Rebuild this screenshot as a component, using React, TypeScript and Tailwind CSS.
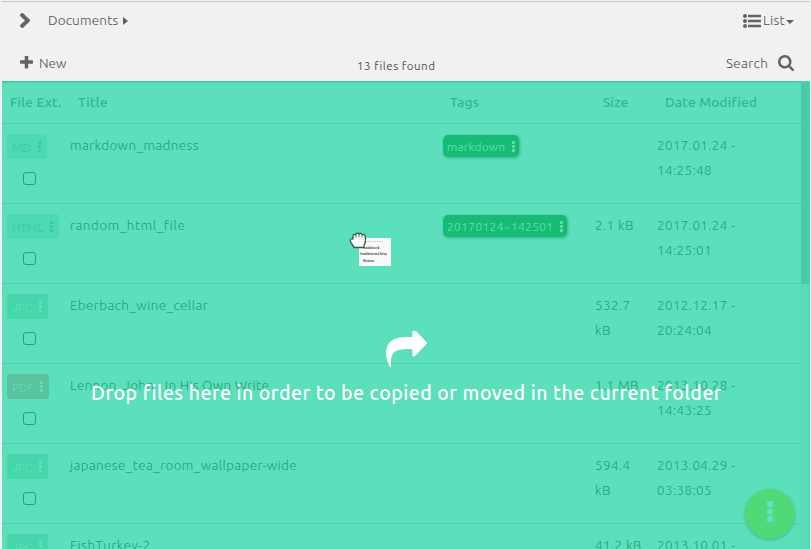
import React from "react";

type FileRow = {
  ext: string;
  badge: string;
  title: string;
  titleTracking: string;
  tag?: string;
  tagClass?: string;
  size?: string[];
  date: string[];
};

const green = "bg-[#4ddab3] text-[#3ac9a0]";
const jpg = "bg-[#47d5ac] text-[#60dfbb]";

const rows: FileRow[] = [
  { ext: "MD", badge: `${green} w-10`, title: "markdown_madness", titleTracking: "tracking-[0.36px]", tag: "markdown", tagClass: "w-[76px] tracking-[0.15px]", date: ["2017.01.24 -", "14:25:48"] },
  { ext: "HTML", badge: `${green} w-[52px]`, title: "random_html_file", titleTracking: "tracking-[0.5px]", tag: "20170124~142501", tagClass: "w-[124px] tracking-[0.33px]", size: ["2.1 kB"], date: ["2017.01.24 -", "14:25:01"] },
  { ext: "JPG", badge: `${jpg} w-[41px]`, title: "Eberbach_wine_cellar", titleTracking: "tracking-[0.38px]", size: ["532.7", "kB"], date: ["2012.12.17 -", "20:24:04"] },
  { ext: "PDF", badge: "bg-[#5ac39e] text-[#61dfbb] w-[42px]", title: "Lennon, John - In His Own Write", titleTracking: "tracking-[0.27px]", size: ["1.1 MB"], date: ["2013.10.28 -", "14:43:25"] },
  { ext: "JPG", badge: `${jpg} w-[41px]`, title: "japanese_tea_room_wallpaper-wide", titleTracking: "tracking-[0.34px]", size: ["594.4", "kB"], date: ["2013.04.29 -", "03:38:05"] },
  { ext: "JPG", badge: `${jpg} w-[41px]`, title: "FishTurkey-2", titleTracking: "tracking-[0.5px]", size: ["41.2 kB"], date: ["2013.10.01 -"] },
];

function Dots({ className }: { className: string }) {
  return (
    <svg viewBox="0 0 3 11" className={className} fill="currentColor">
      <rect width="3" height="3" rx="0.4" />
      <rect y="4" width="3" height="3" rx="0.4" />
      <rect y="8" width="3" height="3" rx="0.4" />
    </svg>
  );
}

function Toolbar() {
  return (
    <header className="ml-0.5 mr-px mt-px h-20 border-t border-[#cacaca] text-[#505050]">
      <div className="flex h-[37px] items-center pl-[18px] pr-4">
        <svg viewBox="346 109 1036 1548" preserveAspectRatio="none" className="h-[15px] w-2.5" fill="#636363" stroke="#636363" strokeWidth="70">
          <path d="M1363 928l-742 710q-19 19-45 19t-45-19l-166-166q-19-19-19-45t19-45l531-499-531-499q-19-19-19-45t19-45l166-166q19-19 45-19t45 19l742 710q19 19 19 45t-19 45z" />
        </svg>
        <span className="ml-[18px] w-[75px] whitespace-nowrap tracking-[0.2px]">Documents</span>
        <svg viewBox="0 0 5 8" className="h-2 w-[5px]" fill="#606060"><path d="M0 0l5 4-5 4z" /></svg>
        <svg viewBox="0 0 18 14" className="ml-auto h-3.5 w-[18px]" fill="#636363">
          <circle cx="2" cy="2" r="2" /><circle cx="2" cy="7" r="2" /><circle cx="2" cy="12" r="2" />
          <rect x="5" y="0.7" width="13" height="2.6" rx=".3" /><rect x="5" y="5.7" width="13" height="2.6" rx=".3" /><rect x="5" y="10.7" width="13" height="2.6" rx=".3" />
        </svg>
        <span className="ml-[2px] w-[23px] whitespace-nowrap tracking-[0.3px]">List</span>
        <svg viewBox="0 0 8 4" className="mt-0.5 h-1 w-2" fill="#606060"><path d="M0 0h8L4 4z" /></svg>
      </div>
      <div className="flex h-[42px] items-center pb-px pl-[18px] pr-4 pt-1.5">
        <svg viewBox="192 192 1408 1408" className="size-[13px]" fill="#636363">
          <path d="M1600 736v192q0 40-28 68t-68 28h-416v416q0 40-28 68t-68 28h-192q-40 0-68-28t-28-68v-416h-416q-40 0-68-28t-28-68v-192q0-40 28-68t68-28h416v-416q0-40 28-68t68-28h192q40 0 68 28t28 68v416h416q40 0 68 28t28 68z" />
        </svg>
        <span className="ml-1.5 mt-0.5">New</span>
        <span className="ml-auto mt-1.5 w-[80px] whitespace-nowrap text-[11.5px] font-normal tracking-[0.52px]">13 files found</span>
        <span className="ml-[289px] mt-0.5 w-[52px] whitespace-nowrap tracking-[0.35px]">Search</span>
        <svg viewBox="64 128 1664 1664" className="size-4" fill="#636363">
          <path d="M1216 832q0-185-131.500-316.500t-316.500-131.500-316.500 131.500-131.500 316.500 131.500 316.500 316.500 131.500 316.500-131.500 131.500-316.500zm512 832q0 52-38 90t-90 38q-54 0-90-38l-343-342q-179 124-399 124-143 0-273.500-55.500t-225-150-150-225-55.500-273.500 55.500-273.500 150-225 225-150 273.500-55.500 273.500 55.500 225 150 150 225 55.500 273.500q0 220-124 399l343 343q37 37 37 90z" />
        </svg>
      </div>
    </header>
  );
}

const columns = "grid grid-cols-[68px_373px_152px_62px_144px]";

function Row({ row }: { row: FileRow }) {
  return (
    <div className={`${columns} h-20 shrink-0 border-b border-[#51d2ad] pt-[9px] leading-[25px]`}>
      <div className="pl-[5px] pt-px">
        <div className={`${row.badge} flex h-[25px] items-center justify-between rounded-[3px] pl-[5px] pr-1.5 text-[12px]`}>
          <span className="mt-0.5">{row.ext}</span>
          <Dots className="h-[11px] w-[3px]" />
        </div>
        <div className="ml-4 mt-[13px] size-[13px] rounded-[3px] border border-[#1fa47e]" />
      </div>
      <div className={`${row.titleTracking} whitespace-nowrap`}>{row.title}</div>
      <div className="pt-0.5">
        {row.tag && (
          <div className={`${row.tagClass} flex h-[22px] items-center justify-between rounded-[5px] bg-[#16bc73] pl-1 pr-1 text-[12px] font-normal text-[#5cdfaf] shadow-[1px_1px_3px_rgba(20,130,95,0.45)]`}>
            <span className="mt-px">{row.tag}</span>
            <Dots className="h-[11px] w-[3px]" />
          </div>
        )}
      </div>
      <div className="tracking-[0.35px]">{row.size?.map((s) => <div key={s} className="whitespace-nowrap">{s}</div>)}</div>
      <div className="tracking-[0.34px]">{row.date.map((d) => <div key={d} className="whitespace-nowrap">{d}</div>)}</div>
    </div>
  );
}

function DragPreview() {
  return (
    <div className="absolute left-[349px] top-[231px] h-9 w-[43px]">
      <div className="absolute left-2.5 top-[7px] flex h-7 w-8 flex-col overflow-hidden whitespace-nowrap bg-[#fafafa] text-[2.600px] font-normal leading-[6.700px] text-[#444]">
        <span className="pl-[7px] text-[2.200px] text-[#888]">SINGLE STARTED</span>
        <span className="pl-1 font-bold">Installation #</span>
        <span className="pl-px font-bold">Installation and Setup</span>
        <span className="pl-1 font-bold">Windows</span>
      </div>
      <svg viewBox="0 0 19 19" className="absolute left-0 top-0 size-[19px]">
        <path d="M5 16.500C4.500 14 1.200 12 1.200 9.500C1.200 8 2.800 7.500 4 8V4.800C4 3.200 6 2.800 6.800 4C7 1.800 9.500 1.500 10 3.200C10.800 1.800 12.800 2 13 3.800C14.500 2.800 16 3.800 16.200 5.500C16.800 9 16.500 12 15 14.500V16.500Z" fill="#fafafa" stroke="#3b5750" strokeWidth="1.300" strokeLinejoin="round" />
        <path d="M6.900 4v2.600M10 3.400v2.700M13 4v2.400" fill="none" stroke="#5b706b" strokeWidth=".9" />
      </svg>
    </div>
  );
}

export default function App() {
  return (
    <div className="relative flex h-[549px] w-[811px] flex-col overflow-hidden bg-[#f1f1f1] font-['Ubuntu','Noto_Sans',sans-serif] text-[13.5px] font-light">
      <Toolbar />
      <main className="ml-0.5 mr-px flex h-[468px] overflow-hidden bg-[#5cdfbb] text-[#1fa27c] shadow-[inset_0_2px_2px_-1px_#37b892]">
        <div className="flex w-[799px] flex-col">
          <div className={`${columns} h-[43px] shrink-0 border-b border-[#51d2ad] pt-[9px] font-medium leading-[25px] tracking-[0.25px] text-[#33b58f]`}>
            <span className="pl-2">File Ext.</span>
            <span className="pl-2">Title</span>
            <span className="pl-[7px]">Tags</span>
            <span className="pl-2">Size</span>
            <span className="pl-2">Date Modified</span>
          </div>
          {rows.map((row) => <Row key={row.title} row={row} />)}
        </div>
        <div className="w-[9px] border-r border-[#53d1b0] bg-[#5bdab7]">
          <div className="mt-px h-[202px] w-2 bg-[#4bc9a6]" />
        </div>
      </main>
      <DragPreview />
      <div className="absolute left-[745px] top-[489px] flex size-[50px] justify-center rounded-full bg-[#51d978] pt-3 shadow-[0_1px_3px_rgba(30,140,110,0.45)]">
        <svg viewBox="0 0 6 21" className="h-[21px] w-1.5" fill="#63e0c3">
          <rect width="6" height="6" rx="1.5" /><rect y="7.500" width="6" height="6" rx="1.5" /><rect y="15" width="6" height="6" rx="1.5" />
        </svg>
      </div>
      <div className="absolute left-[91px] top-[331px] flex w-[631px] flex-col font-medium text-white">
        <svg viewBox="0 128 1792 1536" className="ml-[295px] h-9 w-[41px]" preserveAspectRatio="none" fill="currentColor">
          <path d="M1792 640q0 26-19 45l-512 512q-19 19-45 19t-45-19-19-45v-256h-224q-98 0-175.500 6t-154 21.500-133 42.500-105.500 69.500-80 101-48.500 138.500-17.500 181q0 55 5 123 0 6 2.500 23.500t2.500 26.500q0 15-8.500 25t-23.500 10q-16 0-28-17-7-9-13-22t-13.500-30-10.500-24q-127-285-127-451 0-199 53-333 162-403 875-403h224v-256q0-26 19-45t45-19 45 19l512 512q19 19 19 45z" />
        </svg>
        <p className="mt-[11px] whitespace-nowrap text-[19.500px] leading-[30px] tracking-[0.5px]">Drop files here in order to be copied or moved in the current folder</p>
      </div>
    </div>
  );
}
